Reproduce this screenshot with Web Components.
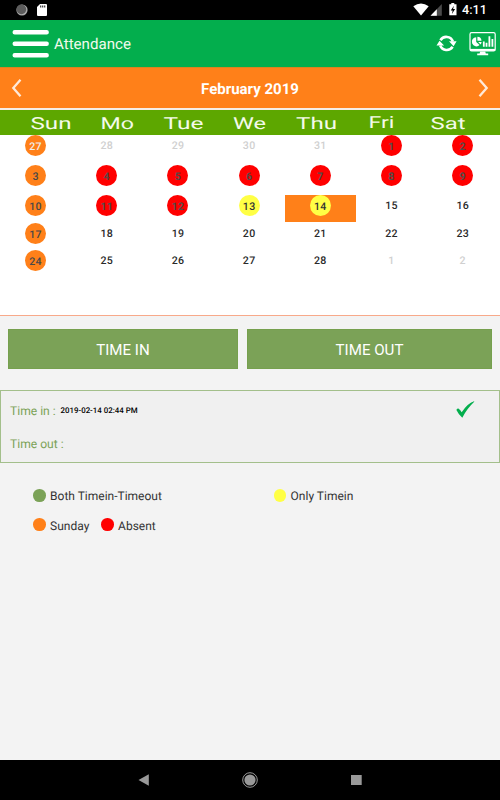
<!DOCTYPE html>
<html lang="en">
<head>
<meta charset="utf-8">
<title>Attendance</title>
<style>
  body {
    margin: 0;
    width: 500px;
    height: 800px;
    display: flex;
    flex-direction: column;
    overflow: hidden;
    background: #f3f3f3;
    font-family: Roboto, sans-serif;
    text-rendering: geometricPrecision;
  }
</style>
</head>
<body>
<status-bar>4:11</status-bar>
<app-toolbar>Attendance</app-toolbar>
<month-bar>February 2019</month-bar>
<week-header></week-header>
<month-grid></month-grid>
<punch-buttons>
  <punch-button>TIME IN</punch-button>
  <punch-button>TIME OUT</punch-button>
</punch-buttons>
<punch-log>
  <punch-row label="Time in :" done>2019-02-14 02:44 PM</punch-row>
  <punch-row label="Time out :"></punch-row>
</punch-log>
<color-legend>
  <legend-item style="--dot: #7ba257; width: 240.5px">Both Timein-Timeout</legend-item>
  <legend-item style="--dot: #ffff45">Only Timein</legend-item>
  <legend-item slot="second" style="--dot: #ff8019; width: 68px">Sunday</legend-item>
  <legend-item slot="second" style="--dot: #ff0000">Absent</legend-item>
</color-legend>
<nav-bar></nav-bar>

<script>
// Attaches an open shadow root filled with the given markup
class BaseElement extends HTMLElement {
  constructor() {
    super();
    const template = document.createElement("template");
    template.innerHTML = this.markup();
    this.attachShadow({ mode: "open" });
    this.shadowRoot.appendChild(template.content.cloneNode(true));
  }
}

class StatusBar extends BaseElement {
  markup() {
    return `
      <style>
        :host {
          display: flex;
          height: 20px;
          background: #000;
          color: #fff;
          font-size: 12.6px;
          line-height: 21px;
        }
        .left { flex: 1; height: 20px; }
        .right { height: 20px; width: 50px; }
        span { width: 38px; padding-left: 1px; font-weight: 500; }
        svg { display: block; }
      </style>
      <div class="left">
        <svg width="60" height="20">
          <circle cx="22" cy="10" r="5.6" fill="#aaa"/>
          <circle cx="21.4" cy="9.4" r="4.8" fill="#5c5c5c"/>
          <path d="M40 4h6q1 0 1 1v10q0 1-1 1h-8q-1 0-1-1V7z" fill="#fff"/>
          <path d="M40.7 5.6v2M42.7 5.6v2M44.7 5.6v2" stroke="#333" stroke-width="1.2"/>
        </svg>
      </div>
      <div class="right">
        <svg width="50" height="20">
          <path d="M2.3 6.2Q10 .6 17.7 6.2L10 15.4z" fill="#fff"/>
          <path d="M30.8 4v11.8H19.5z" fill="#4b4b4b"/>
          <path d="M25.8 9.3v6.5h-6.3z" fill="#fff"/>
          <path d="M38.3 4.2h2V3h3v1.2h2.2v11h-7.2z" fill="#fff"/>
          <path d="M42.9 5.8l-3.2 4.7h2l-.8 3.4 3.2-4.9h-2z" fill="#000"/>
        </svg>
      </div>
      <span><slot></slot></span>`;
  }
}

class AppToolbar extends BaseElement {
  markup() {
    return `
      <style>
        :host {
          display: flex;
          height: 47px;
          background: #03ae4d;
          color: #f0faec;
        }
        .title { flex: 1; font-size: 15.1px; line-height: 49px; }
        svg { display: block; flex: none; }
      </style>
      <svg width="54" height="47">
        <path d="M14.7 12.3h32M14.7 23.7h32M14.7 35.2h32" stroke="#fff" stroke-width="4.4" stroke-linecap="round"/>
      </svg>
      <div class="title"><slot></slot></div>
      <svg width="64" height="47" fill="none" stroke="#fff">
        <path d="M4.4 20.2A7 7 0 0 1 16.9 21.5M16.6 26.8A7 7 0 0 1 4.2 25.6" stroke-width="2.6"/>
        <path d="M13 21.3h7.6l-3 4.9zM8.1 25.6H.5l3-4.9z" fill="#fff" stroke="none"/>
        <rect x="34" y="12.6" width="25.2" height="18.2" rx="1.6" stroke-width="1.2"/>
        <path d="M34 29.9h25.2" stroke-width="2"/>
        <path d="M44.2 31.5h5l.6 2.1h2.4v1.6H41.2v-1.6h2.4z" fill="#fff" stroke="none"/>
        <path d="M40.2 17.2v4.7l3.4 3.2A4.6 4.6 0 1 1 40.2 17.2z" fill="#fff" stroke="none"/>
        <path d="M41.4 16.8a4.3 4.3 0 0 1 4.1 4h-4.1zM42.2 22h3.4q-.1 1.4-1 2.5z" fill="#fff" stroke="none"/>
        <path d="M47.8 26.8v-5.2M50.5 26.8v-4M53.4 26.8v-10.6M56.4 26.8v-7.8" stroke-width="1.8"/>
      </svg>`;
  }
}

class MonthBar extends BaseElement {
  markup() {
    return `
      <style>
        :host {
          display: flex;
          justify-content: space-between;
          height: 41px;
          background: #ff8019;
          color: #fff;
          border-bottom: 2px solid #f5ede6;
          box-shadow: inset 0 1px #d98420;
        }
        b { font-size: 15px; font-weight: 700; line-height: 44px; }
        svg { display: block; }
        path { fill: none; stroke: #ffe9d8; stroke-width: 2.3; }
      </style>
      <svg width="30" height="41"><path d="M20.5 12.8L13.3 21l7.2 8.2"/></svg>
      <b><slot></slot></b>
      <svg width="30" height="41"><path d="M9.5 12.8L16.7 21l-7.2 8.2"/></svg>`;
  }
}

class WeekHeader extends BaseElement {
  markup() {
    // name, left edge, width of each stretched caption
    const days = [
      ["Sun", 30.5, 41], ["Mo", 100.5, 33.5], ["Tue", 163.5, 40], ["We", 233, 33],
      ["Thu", 296, 41], ["Fri", 368.5, 26], ["Sat", 430.5, 35],
    ];
    return `
      <style>
        :host { display: block; height: 25px; background: #5da700; }
        svg { display: block; }
        text { font-size: 16.5px; fill: #f4faea; }
      </style>
      <svg width="500" height="25">
        ${days.map(([name, x, w]) =>
          `<text x="${x}" y="${name === "Fri" ? 18 : 18.8}" textLength="${w}" lengthAdjust="spacingAndGlyphs">${name}</text>`
        ).join("")}
      </svg>`;
  }
}

class DayCell extends BaseElement {
  markup() {
    return `
      <style>
        :host {
          display: block;
          height: 27px;
          color: #2a2a2a;
          font-size: 10.6px;
          font-weight: 500;
          letter-spacing: 0.3px;
          text-align: center;
        }
        span {
          display: block;
          width: 21px;
          height: 21px;
          margin: 0 auto;
          line-height: 21px;
          border-radius: 50%;
        }
        :host([kind]) span { line-height: 23px; color: #484848; }
        :host([kind="sunday"]) span { background: #ff8019; }
        :host([kind="absent"]) span { background: #f00; color: #554a48; font-weight: 700; }
        :host([kind="timein"]) span { background: #ffff45; color: #333; }
        :host([muted]) { color: #d0d0d0; }
        :host([muted][kind]) span { color: #eee; }
        :host([selected]) { background: #ff8019; }
      </style>
      <span><slot></slot></span>`;
  }
}

class MonthGrid extends BaseElement {
  markup() {
    // s = sunday, a = absent, t = time in only, m = other month, x = selected
    const weeks = [
      "27sm 28m 29m 30m 31m 1a 2a",
      "3s 4a 5a 6a 7a 8a 9a",
      "10s 11a 12a 13t 14tx 15 16",
      "17s 18 19 20 21 22 23",
      "24s 25 26 27 28 1m 2m",
    ];
    const kinds = { s: 'kind="sunday"', a: 'kind="absent"', t: 'kind="timein"', m: "muted", x: "selected" };
    const cell = (day) => {
      const attrs = day.replace(/\d/g, "").split("").map((c) => kinds[c]).join(" ");
      return `<day-cell ${attrs}>${parseInt(day)}</day-cell>`;
    };
    return `
      <style>
        :host {
          display: grid;
          grid-template-columns: repeat(7, 71.2px);
          grid-template-rows: 30px 30px 27.5px 27.5px 27.5px;
          box-sizing: border-box;
          height: 181px;
          padding-top: 0.4px;
          background: #fff;
          border-bottom: 1px solid #f8a98a;
        }
      </style>
      ${weeks.map((week) => week.split(" ").map(cell).join("")).join("")}`;
  }
}

class PunchButtons extends BaseElement {
  markup() {
    return `
      <style>
        :host {
          display: grid;
          grid-template-columns: 230px 245px;
          gap: 9px;
          padding: 13.4px 8px 20.6px;
        }
      </style>
      <slot></slot>`;
  }
}

class PunchButton extends BaseElement {
  markup() {
    return `
      <style>
        :host { display: block; }
        button {
          display: block;
          width: 100%;
          height: 40px;
          padding: 1px 0 0;
          border: 1px solid #76a04e;
          background: #7ba257;
          color: #fff;
          font: 15.1px Roboto, sans-serif;
        }
      </style>
      <button><slot></slot></button>`;
  }
}

class PunchLog extends BaseElement {
  markup() {
    return `
      <style>
        :host {
          display: block;
          height: 73px;
          box-sizing: border-box;
          border: 1px solid #a3bf8b;
          background: #f0f0f0;
          padding: 3px 9px;
        }
      </style>
      <slot></slot>`;
  }
}

class PunchRow extends BaseElement {
  markup() {
    return `
      <style>
        :host { display: flex; height: 33px; line-height: 35px; color: #7ba257; }
        label { font-size: 12.1px; }
        span { flex: 1; margin-left: 4.8px; font-size: 7.9px; font-weight: 500; color: #000; line-height: 33px; }
        svg { display: none; margin: 6px 15px 0 0; }
        :host([done]) svg { display: block; }
      </style>
      <label></label>
      <span><slot></slot></span>
      <svg width="20" height="20">
        <path d="M1.4 10Q1.8 8.2 3.4 8.5 5.6 10 6.7 12.3 12.5 3.2 19 1.2 19.6 1.4 19 2 12 8.5 7.3 17.7 3.2 14 1.4 10z" fill="#03ae4d"/>
      </svg>`;
  }

  connectedCallback() {
    this.shadowRoot.querySelector("label").textContent = this.getAttribute("label");
  }
}

class ColorLegend extends BaseElement {
  markup() {
    return `
      <style>
        :host { display: flex; flex-direction: column; flex: 1; padding: 18.5px 33px 0; }
        div { display: flex; height: 29.3px; }
      </style>
      <div><slot></slot></div>
      <div><slot name="second"></slot></div>`;
  }
}

class LegendItem extends BaseElement {
  markup() {
    return `
      <style>
        :host {
          display: flex;
          align-items: center;
          height: 30px;
          gap: 4.5px;
          font-size: 12px;
          color: #333;
          white-space: nowrap;
        }
        i { width: 12.6px; height: 12.6px; border-radius: 50%; background: var(--dot); margin-top: -2px; }
      </style>
      <i></i><slot></slot>`;
  }
}

class NavBar extends BaseElement {
  markup() {
    return `
      <style>
        :host { display: block; height: 40px; background: #000; }
        svg { display: block; margin: 0 auto; }
      </style>
      <svg width="300" height="40" fill="#999">
        <path d="M38.5 20L48.8 14.2v11.6z"/>
        <circle cx="150" cy="20" r="5.6"/>
        <circle cx="150" cy="20" r="7.3" fill="none" stroke="#999"/>
        <rect x="251" y="15" width="10.7" height="10"/>
      </svg>`;
  }
}

customElements.define("status-bar", StatusBar);
customElements.define("app-toolbar", AppToolbar);
customElements.define("month-bar", MonthBar);
customElements.define("week-header", WeekHeader);
customElements.define("day-cell", DayCell);
customElements.define("month-grid", MonthGrid);
customElements.define("punch-buttons", PunchButtons);
customElements.define("punch-button", PunchButton);
customElements.define("punch-log", PunchLog);
customElements.define("punch-row", PunchRow);
customElements.define("color-legend", ColorLegend);
customElements.define("legend-item", LegendItem);
customElements.define("nav-bar", NavBar);
</script>
</body>
</html>
